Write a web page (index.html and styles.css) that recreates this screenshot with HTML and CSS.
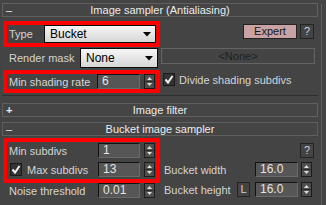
FILE: index.html
```html
<!DOCTYPE html>
<html lang="en">
<head>
    <meta charset="UTF-8">
    <title>Image sampler</title>
    <link rel="stylesheet" href="styles.css">
</head>
<body>
    <div class="page">
        <div class="panel">
            <div class="head"><span class="sign">–</span><span class="title">Image sampler (Antialiasing)</span></div>
            <div class="sampler">
                <div class="row row-type">
                    <div class="left">
                        <div class="mark mark-type">
                            <span class="lbl">Type</span>
                            <div class="drop drop-type">Bucket<svg class="arrow" width="8" height="5" viewBox="0 0 8 5"><path d="M0 0h8l-4 4.5z" fill="#000"/></svg></div>
                        </div>
                    </div>
                    <div class="right tools">
                        <button class="btn expert">Expert</button>
                        <button class="btn help">?</button>
                    </div>
                </div>
                <div class="row row-mask">
                    <div class="left line-mask">
                        <span class="lbl">Render mask</span>
                        <div class="drop drop-mask">None<svg class="arrow" width="8" height="5" viewBox="0 0 8 5"><path d="M0 0h8l-4 4.5z" fill="#000"/></svg></div>
                    </div>
                    <div class="right">
                        <button class="btn none">&lt;None&gt;</button>
                    </div>
                </div>
                <div class="row row-rate">
                    <div class="left">
                        <div class="mark mark-rate">
                            <span class="lbl">Min shading rate</span>
                            <span class="field">6</span>
                            <svg class="spin" width="11" height="15" viewBox="0 0 11 15"><rect x="0.5" y="0.5" width="10" height="14" fill="#4e4e4e" stroke="#1c1c1c"/><line x1="1" y1="7.5" x2="10" y2="7.5" stroke="#2a2a2a"/><path d="M3 6h5l-2.5-3z" fill="#e0e0e0"/><path d="M3 9h5l-2.5 3z" fill="#e0e0e0"/></svg>
                        </div>
                    </div>
                    <div class="right">
                        <label class="check"><svg class="box" width="12" height="13" viewBox="0 0 12 13"><rect x="0.5" y="0.5" width="11" height="12" fill="#333" stroke="#1a1a1a"/><path d="M2.5 6.5l2.5 3 4.5-6.5" fill="none" stroke="#eee" stroke-width="2"/></svg>Divide shading subdivs</label>
                    </div>
                </div>
            </div>
            <div class="head head-filter"><span class="sign sign-plus">+</span><span class="title">Image filter</span></div>
            <div class="head head-bucket"><span class="sign">–</span><span class="title">Bucket image sampler</span></div>
            <div class="bucket">
                <div class="left">
                    <div class="mark mark-subdivs">
                        <div class="line line-min">
                            <span class="lbl">Min subdivs</span>
                            <span class="field field-sub">1</span>
                            <svg class="spin" width="11" height="15" viewBox="0 0 11 15"><rect x="0.5" y="0.5" width="10" height="14" fill="#4e4e4e" stroke="#1c1c1c"/><line x1="1" y1="7.5" x2="10" y2="7.5" stroke="#2a2a2a"/><path d="M3 6h5l-2.5-3z" fill="#e0e0e0"/><path d="M3 9h5l-2.5 3z" fill="#e0e0e0"/></svg>
                        </div>
                        <div class="line line-max">
                            <svg class="box" width="12" height="13" viewBox="0 0 12 13"><rect x="0.5" y="0.5" width="11" height="12" fill="#333" stroke="#1a1a1a"/><path d="M2.5 6.5l2.5 3 4.5-6.5" fill="none" stroke="#eee" stroke-width="2"/></svg>
                            <span class="lbl">Max subdivs</span>
                            <span class="field field-sub">13</span>
                            <svg class="spin" width="11" height="15" viewBox="0 0 11 15"><rect x="0.5" y="0.5" width="10" height="14" fill="#4e4e4e" stroke="#1c1c1c"/><line x1="1" y1="7.5" x2="10" y2="7.5" stroke="#2a2a2a"/><path d="M3 6h5l-2.5-3z" fill="#e0e0e0"/><path d="M3 9h5l-2.5 3z" fill="#e0e0e0"/></svg>
                        </div>
                    </div>
                    <div class="line line-noise">
                        <span class="lbl">Noise threshold</span>
                        <span class="field field-sub">0.01</span>
                        <svg class="spin" width="11" height="15" viewBox="0 0 11 15"><rect x="0.5" y="0.5" width="10" height="14" fill="#4e4e4e" stroke="#1c1c1c"/><line x1="1" y1="7.5" x2="10" y2="7.5" stroke="#2a2a2a"/><path d="M3 6h5l-2.5-3z" fill="#e0e0e0"/><path d="M3 9h5l-2.5 3z" fill="#e0e0e0"/></svg>
                    </div>
                </div>
                <div class="right bucket-right">
                    <button class="btn help help-bucket">?</button>
                    <div class="line line-width">
                        <span class="lbl">Bucket width</span>
                        <span class="field field-size">16.0</span>
                        <svg class="spin" width="11" height="15" viewBox="0 0 11 15"><rect x="0.5" y="0.5" width="10" height="14" fill="#4e4e4e" stroke="#1c1c1c"/><line x1="1" y1="7.5" x2="10" y2="7.5" stroke="#2a2a2a"/><path d="M3 6h5l-2.5-3z" fill="#e0e0e0"/><path d="M3 9h5l-2.5 3z" fill="#e0e0e0"/></svg>
                    </div>
                    <div class="line line-height">
                        <span class="lbl">Bucket height</span>
                        <button class="btn lock">L</button>
                        <span class="field field-size">16.0</span>
                        <svg class="spin" width="11" height="15" viewBox="0 0 11 15"><rect x="0.5" y="0.5" width="10" height="14" fill="#4e4e4e" stroke="#1c1c1c"/><line x1="1" y1="7.5" x2="10" y2="7.5" stroke="#2a2a2a"/><path d="M3 6h5l-2.5-3z" fill="#e0e0e0"/><path d="M3 9h5l-2.5 3z" fill="#e0e0e0"/></svg>
                    </div>
                </div>
            </div>
        </div>
        <div class="rail"></div>
    </div>
</body>
</html>
```

FILE: styles.css
```css
body {
    margin: 0;
    background-color: #444444;
    font-family: 'Liberation Sans', Arial, sans-serif;
    font-size: 11px;
    color: #d4d4d4;
}
.page {
    display: flex;
    height: 205px;
    overflow: hidden;
}
.panel {
    width: 316px;
    margin-left: 2px;
    padding-top: 3px;
}
.rail {
    width: 2px;
    margin-left: 3px;
    margin-top: 4px;
    border-left: 1px solid #5e5e5e;
}
.head {
    box-sizing: border-box;
    height: 14px;
    border: 1px solid #5f5f5f;
    background-color: #454545;
    display: grid;
    grid-template-columns: 14px 1fr 14px;
    align-items: center;
    line-height: 12px;
    color: #ececec;
}
.head .sign {
    padding-left: 3px;
}
.head .sign-plus {
    font-weight: bold;
}
.head .title {
    text-align: center;
}
.head-filter {
    margin-top: 7px;
}
.head-bucket {
    margin-top: 5px;
}
.sampler {
    padding: 4px 0 2px;
    border-bottom: 1px solid #2e2e2e;
}
.row {
    display: flex;
}
.left {
    width: 158px;
}
.right {
    width: 158px;
}
.row-type {
    height: 26px;
}
.row-mask {
    height: 20px;
    margin-top: 1px;
}
.row-rate {
    height: 23px;
    margin-top: 2px;
}
.mark {
    box-sizing: border-box;
    margin-left: 1px;
    width: 157px;
    border: 4px solid #ff0000;
}
.mark-type, .mark-rate {
    height: 100%;
    display: flex;
    align-items: center;
}
.lbl {
    flex: 1;
    white-space: nowrap;
}
.mark .lbl {
    padding-left: 2px;
}
.drop {
    box-sizing: border-box;
    display: flex;
    align-items: center;
    justify-content: space-between;
    padding: 0 4px 0 5px;
    background: linear-gradient(#f6f6f6, #d6d6d6);
    border: 1px solid #0a0a0a;
    color: #000;
    font-size: 12px;
}
.drop-type {
    width: 112px;
    height: 18px;
}
.line-mask {
    display: flex;
    align-items: center;
    padding-left: 7px;
    box-sizing: border-box;
}
.drop-mask {
    width: 78px;
    height: 20px;
    margin-right: 2px;
}
.btn {
    box-sizing: border-box;
    font-family: inherit;
    font-size: 11px;
    padding: 0;
    height: 15px;
    border: 1px solid #232323;
    background-color: #444444;
    color: #d0d0d0;
    line-height: 13px;
}
.tools {
    display: flex;
    justify-content: flex-end;
    gap: 3px;
    padding: 3px 4px 0 0;
    box-sizing: border-box;
}
.expert {
    width: 54px;
    background-color: #c9a3a3;
    color: #151515;
}
.help {
    width: 14px;
}
.none {
    margin-left: 1px;
    width: 154px;
    height: 16px;
    border-color: #646464;
    color: #202020;
}
.field {
    box-sizing: border-box;
    height: 15px;
    background-color: #565656;
    border-top: 1px solid #121212;
    border-left: 1px solid #121212;
    border-right: 1px solid #6a6a6a;
    border-bottom: 1px solid #6a6a6a;
    padding-left: 4px;
    line-height: 13px;
    font-size: 12px;
    color: #e4e4e4;
}
.mark-rate .field {
    width: 43px;
}
.spin {
    flex: none;
    margin: 0 1px 0 4px;
}
.check {
    display: flex;
    align-items: center;
    gap: 4px;
    margin: 3px 0 0 3px;
    white-space: nowrap;
}
.box {
    flex: none;
}
.bucket {
    display: flex;
    padding-top: 2px;
}
.mark-subdivs {
    height: 45px;
    padding-top: 1px;
}
.line {
    display: flex;
    align-items: center;
    height: 15px;
}
.line-max {
    margin-top: 4px;
}
.line-max .box {
    margin: 0 5px 0 3px;
}
.line-max .lbl {
    padding-left: 0;
}
.field-sub {
    width: 42px;
}
.line-noise {
    padding: 0 4px 0 7px;
}
.bucket-right {
    display: flex;
    flex-direction: column;
    padding-top: 5px;
}
.help-bucket {
    align-self: flex-end;
    margin-right: 4px;
}
.line-width, .line-height {
    padding: 0 5px 0 4px;
}
.line-width {
    margin-top: 4px;
}
.line-height {
    margin-top: 5px;
}
.field-size {
    width: 43px;
}
.lock {
    width: 13px;
    margin-right: 5px;
}
.bucket-right .spin {
    margin: 0 1px 0 3px;
}
```
